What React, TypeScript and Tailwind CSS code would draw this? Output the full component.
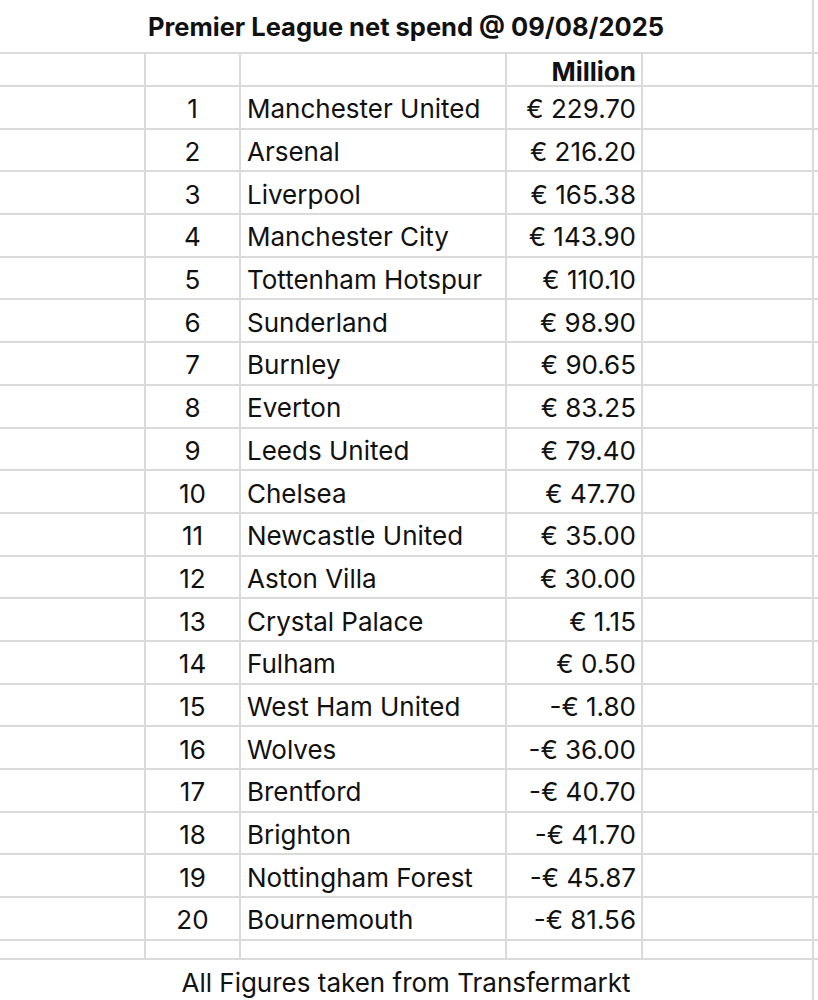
const clubs: [string, string][] = [
  ["Manchester United", "€ 229.70"],
  ["Arsenal", "€ 216.20"],
  ["Liverpool", "€ 165.38"],
  ["Manchester City", "€ 143.90"],
  ["Tottenham Hotspur", "€ 110.10"],
  ["Sunderland", "€ 98.90"],
  ["Burnley", "€ 90.65"],
  ["Everton", "€ 83.25"],
  ["Leeds United", "€ 79.40"],
  ["Chelsea", "€ 47.70"],
  ["Newcastle United", "€ 35.00"],
  ["Aston Villa", "€ 30.00"],
  ["Crystal Palace", "€ 1.15"],
  ["Fulham", "€ 0.50"],
  ["West Ham United", "-€ 1.80"],
  ["Wolves", "-€ 36.00"],
  ["Brentford", "-€ 40.70"],
  ["Brighton", "-€ 41.70"],
  ["Nottingham Forest", "-€ 45.87"],
  ["Bournemouth", "-€ 81.56"],
];

const cell = "bg-white flex items-center leading-none pt-[4px]";

export default function App() {
  return (
    <div className="w-[818px] h-[1000px] overflow-hidden bg-white text-[#111] font-['Inter',sans-serif] text-[26px]">
      <div className="grid h-full gap-[2px] bg-[#dadada] grid-cols-[144px_93px_264px_134px_169px_4px] grid-rows-[52px_31px_repeat(20,40.7px)_17px_40px]">
        {/* title */}
        <div className="col-span-5 bg-white flex items-center justify-center font-bold text-[25.5px] leading-none pt-[1px]">
          Premier League net spend @ 09/08/2025
        </div>
        <div className="bg-white" />

        {/* header */}
        <div className="bg-white" />
        <div className="bg-white" />
        <div className="bg-white" />
        <div className="bg-white flex items-end justify-end pr-[5px] font-bold leading-none">Million</div>
        <div className="bg-white" />
        <div className="bg-white" />

        {clubs.map(([name, amount], i) => (
          <div key={name} className="contents">
            <div className="bg-white" />
            <div className={`${cell} justify-center`}>{i + 1}</div>
            <div className={`${cell} pl-[6px]`}>{name}</div>
            <div className={`${cell} justify-end pr-[5px]`}>{amount}</div>
            <div className="bg-white" />
            <div className="bg-white" />
          </div>
        ))}

        {/* spacer row */}
        <div className="bg-white" />
        <div className="bg-white" />
        <div className="bg-white" />
        <div className="bg-white" />
        <div className="bg-white" />
        <div className="bg-white" />

        {/* footer */}
        <div className="col-span-5 bg-white flex items-start justify-center leading-none pt-[10px]">
          All Figures taken from Transfermarkt
        </div>
        <div className="bg-white" />
      </div>
    </div>
  );
}
